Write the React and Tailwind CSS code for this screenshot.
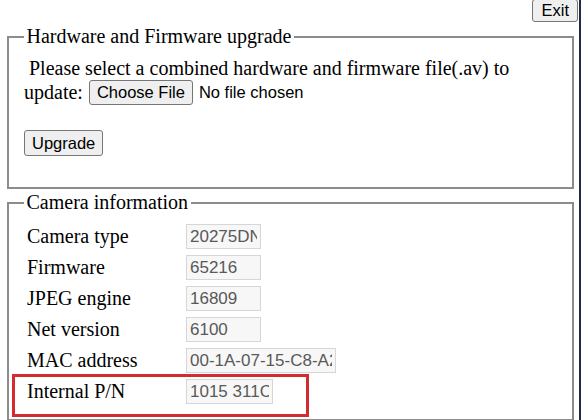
const btn =
  'px-[7px] bg-[#efefef] border border-[#767676] rounded-[3px] text-[16.5px] leading-none text-black font-["Liberation_Sans",Arial,sans-serif]'

const rows = [
  { label: 'Camera type', value: '20275DN-HD', w: 'w-[75px]' },
  { label: 'Firmware', value: '65216', w: 'w-[75px]' },
  { label: 'JPEG engine', value: '16809', w: 'w-[75px]' },
  { label: 'Net version', value: '6100', w: 'w-[75px]' },
  { label: 'MAC address', value: '00-1A-07-15-C8-A2', w: 'w-[150px]' },
  { label: 'Internal P/N', value: '1015 311C', w: 'w-[87px]' },
]

function App() {
  return (
    <div className='relative w-[581px] h-[420px] overflow-hidden bg-white border-r-2 border-[#1e2b45] font-["Liberation_Serif","Times_New_Roman",serif] text-[20px] text-black'>
      <div className="flex justify-end pr-[1px]">
        <button type="button" className={btn + ' h-[23px] -mt-[1px] px-[8px]'}>
          Exit
        </button>
      </div>

      <fieldset className="ml-[7px] mt-[3px] w-[567px] border-2 border-[#8c8c8c] px-[15px] pt-[9px] pb-[12px]">
        <legend className="px-[2.5px] leading-[23px]">Hardware and Firmware upgrade</legend>
        <div className="leading-[23px]">&nbsp;Please select a combined hardware and firmware file(.av) to</div>
        <div className="flex items-center h-[25px] leading-[23px]">
          <span>update:</span>
          <button type="button" className={btn + ' h-[25px] ml-[6px]'}>
            Choose File
          </button>
          <span className='ml-[6px] text-[16.5px] font-["Liberation_Sans",Arial,sans-serif]'>No file chosen</span>
        </div>
        <div className="mt-[22px] h-[48px]">
          <button type="button" className={btn + ' h-[26px]'}>
            Upgrade
          </button>
        </div>
      </fieldset>

      <fieldset className="ml-[7px] mt-[2px] w-[567px] border-2 border-[#8c8c8c] px-[15px] pt-[7px] pb-[12px]">
        <legend className="px-[2.5px] leading-[23px]">Camera information</legend>
        {rows.map((row) => (
          <div key={row.label} className="flex items-center h-[31px]">
            <span className="w-[162px] pl-[3px] leading-[23px]">{row.label}</span>
            <input
              readOnly
              value={row.value}
              className={
                row.w +
                ' h-[25px] px-[3px] bg-[#f7f7f7] border border-[#d6d6d6] text-[17px] text-[#595959] outline-none font-["Liberation_Sans",Arial,sans-serif]'
              }
            />
          </div>
        ))}
      </fieldset>

      <div className="absolute left-[12px] top-[374px] w-[297px] h-[43px] border-[3px] border-[#d42b31]" />
    </div>
  )
}

export default App
